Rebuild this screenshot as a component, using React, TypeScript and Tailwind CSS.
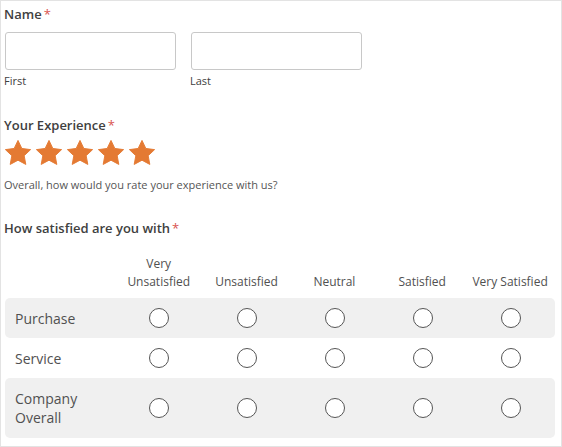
import React from "react";

const columns = ["Very Unsatisfied", "Unsatisfied", "Neutral", "Satisfied", "Very Satisfied"];

const rows = [
  { label: "Purchase", shaded: true, tall: false },
  { label: "Service", shaded: false, tall: false },
  { label: "Company Overall", shaded: true, tall: true },
];

function Star() {
  return (
    <svg width="28" height="28" viewBox="0 0 24 24" className="block">
      <path
        d="M12 1.2l3.3 6.9 7.5 1-5.5 5.2 1.4 7.5L12 18.2l-6.7 3.6 1.4-7.5L1.2 9.1l7.5-1z"
        fill="#e47a33"
        stroke="#e47a33"
        strokeWidth="0.8"
        strokeLinejoin="round"
      />
    </svg>
  );
}

function Label({ text }: { text: string }) {
  return (
    <div className="text-[13px] font-semibold text-[#404040] leading-[18px]">
      {text}
      <span className="text-[#d9534f] font-normal ml-[2px]">*</span>
    </div>
  );
}

export default function App() {
  return (
    <div
      className="w-[562px] h-[447px] border border-[#e3e3e3] bg-white text-[#404040] overflow-hidden"
      style={{ fontFamily: '"Open Sans", "Noto Sans", sans-serif' }}
    >
      <div className="pl-[3px] pr-[7px] pt-[4px]">
        {/* Name */}
        <Label text="Name" />
        <div className="flex gap-[14px] mt-[9px]">
          <div className="flex flex-col">
            <div className="w-[171px] h-[38px] ml-[1px] border border-[#c8c8c8] rounded-[3px] bg-white" />
            <span className="text-[11px] leading-[14px] mt-[4px] text-[#404040]">First</span>
          </div>
          <div className="flex flex-col">
            <div className="w-[171px] h-[38px] ml-[1px] border border-[#c8c8c8] rounded-[3px] bg-white" />
            <span className="text-[11px] leading-[14px] mt-[4px] text-[#404040]">Last</span>
          </div>
        </div>

        {/* Experience */}
        <div className="mt-[28px]">
          <Label text="Your Experience" />
        </div>
        <div className="flex gap-[3px] mt-[5px]">
          {[0, 1, 2, 3, 4].map((i) => (
            <Star key={i} />
          ))}
        </div>
        <p className="text-[11px] leading-[14px] mt-[11px] text-[#555]">
          Overall, how would you rate your experience with us?
        </p>

        {/* Matrix */}
        <div className="mt-[27px]">
          <Label text="How satisfied are you with" />
        </div>
        <div className="mt-[18px]">
          <div className="flex items-end h-[36px] text-[12px] leading-[18px] text-[#505050]">
            <div className="w-[111px]" />
            {columns.map((c) => (
              <div key={c} className="w-[88px] text-center">
                {c === "Very Unsatisfied" ? (
                  <>
                    Very
                    <br />
                    Unsatisfied
                  </>
                ) : (
                  c
                )}
              </div>
            ))}
          </div>
          <div className="mt-[7px] ml-[1px] w-[550px]">
            {rows.map((r) => (
              <div
                key={r.label}
                className={`flex items-center rounded-[5px] ${r.tall ? "h-[60px]" : "h-[40px]"} ${
                  r.shaded ? "bg-[#f0f0f0]" : ""
                }`}
              >
                <div className="w-[110px] pl-[10px] text-[14px] leading-[19px] text-[#505050]">
                  {r.label === "Company Overall" ? (
                    <>
                      Company
                      <br />
                      Overall
                    </>
                  ) : (
                    r.label
                  )}
                </div>
                {columns.map((c) => (
                  <div key={c} className="w-[88px] flex justify-center">
                    <div className="w-[20px] h-[20px] rounded-full border border-[#555] bg-white" />
                  </div>
                ))}
              </div>
            ))}
          </div>
        </div>
      </div>
    </div>
  );
}
